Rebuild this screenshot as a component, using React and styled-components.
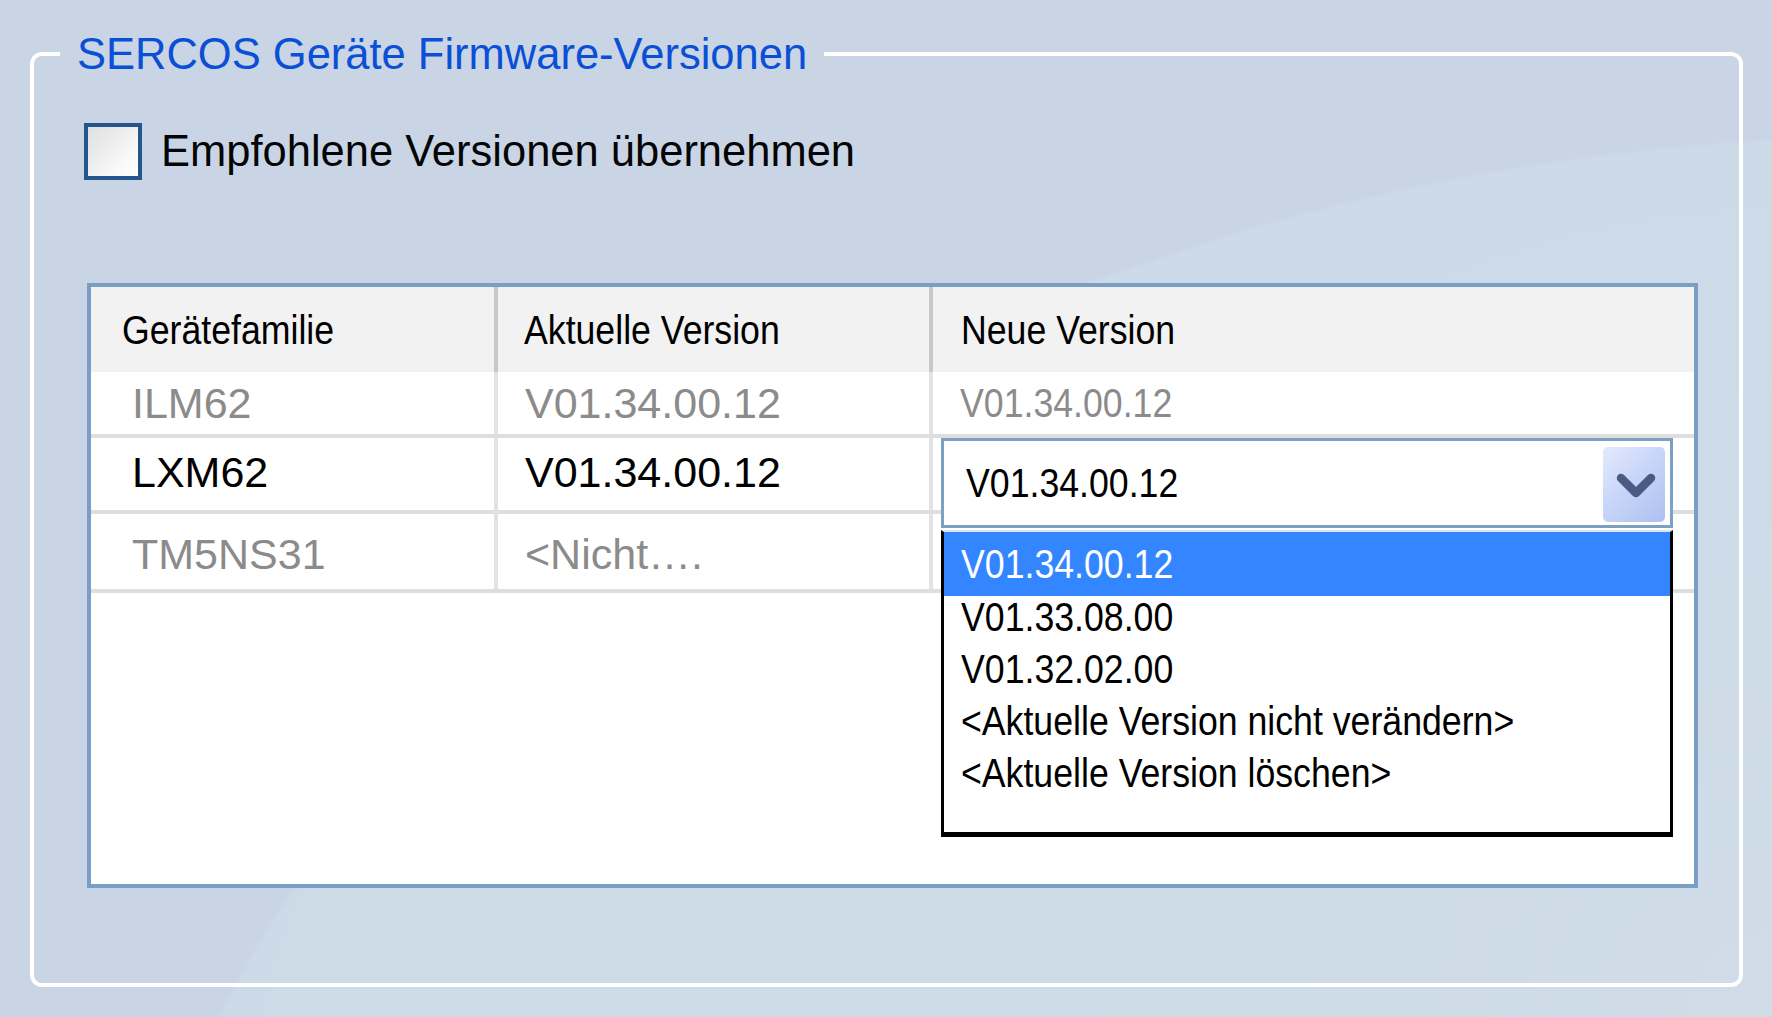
import React from 'react';
import styled, { createGlobalStyle } from 'styled-components';

const GlobalStyle = createGlobalStyle`
  html, body { margin: 0; padding: 0; }
  body {
    font-family: "Liberation Sans", Arial, Helvetica, sans-serif;
    background: #c9d5e5;
  }
`;

const Page = styled.div`
  box-sizing: border-box;
  width: 1772px;
  height: 1017px;
  overflow: hidden;
  padding: 30px 0 0 30px;
  background-color: #c9d5e5;
  background-image:
    radial-gradient(1800px 1365px at 1900px 1500px, rgba(206, 220, 232, 0.75) 99.7%, transparent 100%),
    radial-gradient(650px 650px at 900px 1150px, rgba(207, 219, 232, 0.6) 99.6%, transparent 100%),
    radial-gradient(900px 900px at 1772px 1017px, rgba(214, 222, 234, 0.9) 0%, rgba(210, 219, 233, 0.4) 55%, transparent 100%);
`;

const Group = styled.fieldset`
  box-sizing: border-box;
  width: 1713px;
  height: 957px;
  margin: 0;
  padding: 0;
  min-width: 0;
  border: 4px solid #ffffff;
  border-radius: 12px;
`;

const Legend = styled.legend`
  margin-left: 26px;
  padding: 0 17px;
  font-size: 43.5px;
  line-height: 48px;
  color: #0a4fd6;
  white-space: nowrap;
`;

const Content = styled.div`
  padding: 44px 41px 0 50px;
`;

const CheckRow = styled.label`
  display: flex;
  align-items: center;
  gap: 19px;
  height: 58px;
`;

const CheckBox = styled.span`
  box-sizing: border-box;
  width: 58px;
  height: 57px;
  border: 4px solid #24568b;
  background: linear-gradient(135deg, #e0e0e0 0%, #ebebeb 35%, #f7f7f7 65%, #ffffff 100%);
`;

const CheckLabel = styled.span`
  font-size: 43.5px;
  line-height: 48px;
  color: #050505;
  white-space: nowrap;
`;

const Table = styled.div`
  box-sizing: border-box;
  width: 1611px;
  height: 605px;
  margin: 103px 0 0 3px;
  border: 4px solid #7a9fc4;
  background: #ffffff;
  display: flex;
  flex-direction: column;
`;

const HeaderRow = styled.div`
  display: grid;
  grid-template-columns: 407px 435px 1fr;
  height: 85px;
  background: #f2f2f2;
`;

const HeadCell = styled.div`
  box-sizing: border-box;
  display: flex;
  align-items: center;
  padding-left: ${p => p.$pad}px;
  border-right: ${p => (p.$last ? 'none' : '4px solid #c8c8c8')};
  color: #000;
`;

const DataRow = styled.div`
  box-sizing: border-box;
  display: grid;
  grid-template-columns: 407px 435px 1fr;
  height: ${p => p.$h}px;
  border-bottom: 4px solid #dedede;
  color: ${p => (p.$muted ? '#8b8b8b' : '#000')};
`;

const Cell = styled.div`
  position: relative;
  box-sizing: border-box;
  display: flex;
  align-items: center;
  padding-left: ${p => p.$pad}px;
  padding-top: ${p => (p.$nudge > 0 ? p.$nudge : 0)}px;
  padding-bottom: ${p => (p.$nudge < 0 ? -p.$nudge : 0)}px;
  border-right: ${p => (p.$last ? 'none' : '4px solid #e3e3e3')};
`;

const Plain = styled.span`
  font-size: 43px;
  line-height: 48px;
  white-space: nowrap;
`;

const Narrow = styled.span`
  display: block;
  font-size: 41px;
  line-height: 42px;
  white-space: nowrap;
  transform: scaleX(0.87);
  transform-origin: 0 50%;
`;

const Picker = styled.div`
  position: absolute;
  top: 0;
  left: 8px;
  width: 732px;
  z-index: 3;
`;

const Combo = styled.div`
  box-sizing: border-box;
  height: 90px;
  border: 3px solid #7c9fc4;
  background: #fff;
  display: flex;
  justify-content: space-between;
  align-items: center;
  padding-left: 22px;
  color: #000;
`;

const DropButton = styled.div`
  align-self: flex-start;
  margin: 6px 5px 0 0;
  width: 62px;
  height: 75px;
  border-radius: 5px;
  background: linear-gradient(135deg, #e3eafd 0%, #c9d6f8 45%, #adc0f0 100%);
  display: flex;
  align-items: center;
  justify-content: center;
`;

const DropList = styled.div`
  margin-top: 2px;
  border: 3px solid #000;
  border-top: 2px solid #dbe4f2;
  border-bottom-width: 5px;
  background: #fff;
  padding-bottom: 28px;
`;

const Option = styled.div`
  box-sizing: border-box;
  display: flex;
  align-items: flex-start;
  height: ${p => (p.$selected ? 64 : 52)}px;
  padding: ${p => (p.$selected ? '11px 0 0 17px' : '0 0 0 17px')};
  background: ${p => (p.$selected ? '#3386ff' : 'transparent')};
  color: ${p => (p.$selected ? '#fff' : '#000')};
`;

const Chevron = () => (
  <svg width="40" height="27" viewBox="0 0 40 27" style={{ marginLeft: 4, marginTop: 4 }}>
    <polyline
      points="5,5 20,20 35,5"
      fill="none"
      stroke="#4a5a82"
      strokeWidth="8.5"
      strokeLinecap="round"
      strokeLinejoin="round"
    />
  </svg>
);

const options = [
  'V01.34.00.12',
  'V01.33.08.00',
  'V01.32.02.00',
  '<Aktuelle Version nicht verändern>',
  '<Aktuelle Version löschen>',
];

export default function App() {
  return (
    <>
      <GlobalStyle />
      <Page>
        <Group>
          <Legend>SERCOS Geräte Firmware-Versionen</Legend>
          <Content>
            <CheckRow>
              <CheckBox />
              <CheckLabel>Empfohlene Versionen übernehmen</CheckLabel>
            </CheckRow>
            <Table>
              <HeaderRow>
                <HeadCell $pad={31}><Narrow>Gerätefamilie</Narrow></HeadCell>
                <HeadCell $pad={26}><Narrow>Aktuelle Version</Narrow></HeadCell>
                <HeadCell $pad={28} $last><Narrow>Neue Version</Narrow></HeadCell>
              </HeaderRow>
              <DataRow $h={66} $muted>
                <Cell $pad={41}><Plain>ILM62</Plain></Cell>
                <Cell $pad={27}><Plain>V01.34.00.12</Plain></Cell>
                <Cell $pad={27} $last><Narrow>V01.34.00.12</Narrow></Cell>
              </DataRow>
              <DataRow $h={76}>
                <Cell $pad={41} $nudge={-4}><Plain>LXM62</Plain></Cell>
                <Cell $pad={27} $nudge={-4}><Plain>V01.34.00.12</Plain></Cell>
                <Cell $pad={27} $last>
                  <Picker>
                    <Combo>
                      <Narrow>V01.34.00.12</Narrow>
                      <DropButton><Chevron /></DropButton>
                    </Combo>
                    <DropList>
                      {options.map((o, i) => (
                        <Option key={o} $selected={i === 0}>
                          <Narrow>{o}</Narrow>
                        </Option>
                      ))}
                    </DropList>
                  </Picker>
                </Cell>
              </DataRow>
              <DataRow $h={79} $muted>
                <Cell $pad={41} $nudge={4}><Plain>TM5NS31</Plain></Cell>
                <Cell $pad={27} $nudge={4}><Plain>&lt;Nicht….</Plain></Cell>
                <Cell $pad={27} $last />
              </DataRow>
            </Table>
          </Content>
        </Group>
      </Page>
    </>
  );
}
